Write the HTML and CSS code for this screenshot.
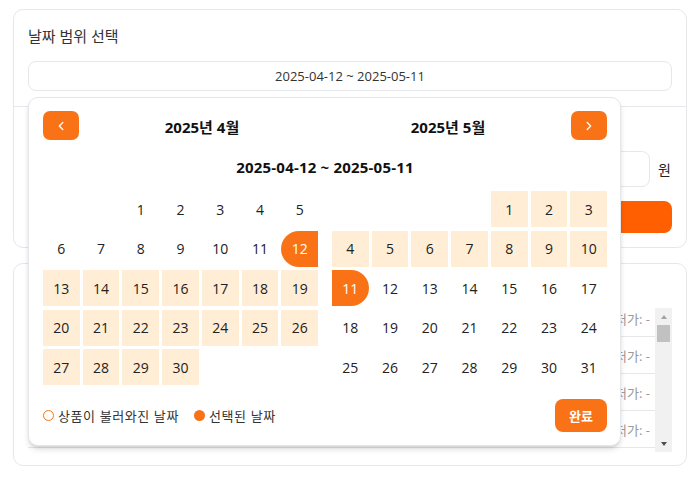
FILE: index.html
```html
<!DOCTYPE html>
<html lang="ko">
<head>
<meta charset="utf-8">
<title>날짜 범위 선택</title>
<link rel="stylesheet" href="styles.css">
</head>
<body>
<div class="page">
  <div class="card">
    <div class="section section-top">
      <div class="title">날짜 범위 선택</div>
      <div class="date-field">
        <div class="date-input">2025-04-12 ~ 2025-05-11</div>
        <div class="popup">
          <div class="cal-header">
            <button class="nav-btn"><svg width="10" height="10" viewBox="0 0 10 10"><path d="M6.8 1.5 L3.3 5 L6.8 8.5" fill="none" stroke="#fff" stroke-width="1.3" stroke-linecap="round" stroke-linejoin="round"/></svg></button>
            <div class="month-label">2025년 4월</div>
            <div class="month-label">2025년 5월</div>
            <button class="nav-btn"><svg width="10" height="10" viewBox="0 0 10 10"><path d="M3.2 1.5 L6.7 5 L3.2 8.5" fill="none" stroke="#fff" stroke-width="1.3" stroke-linecap="round" stroke-linejoin="round"/></svg></button>
          </div>
          <div class="range-text">2025-04-12 ~ 2025-05-11</div>
          <div class="months">
            <div class="month">
              <div class="day empty"></div><div class="day empty"></div>
              <div class="day">1</div><div class="day">2</div><div class="day">3</div><div class="day">4</div><div class="day">5</div>
              <div class="day">6</div><div class="day">7</div><div class="day">8</div><div class="day">9</div><div class="day">10</div><div class="day">11</div><div class="day start">12</div>
              <div class="day range">13</div><div class="day range">14</div><div class="day range">15</div><div class="day range">16</div><div class="day range">17</div><div class="day range">18</div><div class="day range">19</div>
              <div class="day range">20</div><div class="day range">21</div><div class="day range">22</div><div class="day range">23</div><div class="day range">24</div><div class="day range">25</div><div class="day range">26</div>
              <div class="day range">27</div><div class="day range">28</div><div class="day range">29</div><div class="day range">30</div>
            </div>
            <div class="month">
              <div class="day empty"></div><div class="day empty"></div><div class="day empty"></div><div class="day empty"></div>
              <div class="day range">1</div><div class="day range">2</div><div class="day range">3</div>
              <div class="day range">4</div><div class="day range">5</div><div class="day range">6</div><div class="day range">7</div><div class="day range">8</div><div class="day range">9</div><div class="day range">10</div>
              <div class="day end">11</div><div class="day">12</div><div class="day">13</div><div class="day">14</div><div class="day">15</div><div class="day">16</div><div class="day">17</div>
              <div class="day">18</div><div class="day">19</div><div class="day">20</div><div class="day">21</div><div class="day">22</div><div class="day">23</div><div class="day">24</div>
              <div class="day">25</div><div class="day">26</div><div class="day">27</div><div class="day">28</div><div class="day">29</div><div class="day">30</div><div class="day">31</div>
            </div>
          </div>
          <div class="cal-footer">
            <div class="legend">
              <div class="legend-item"><span class="dot hollow"></span>상품이 불러와진 날짜</div>
              <div class="legend-item"><span class="dot filled"></span>선택된 날짜</div>
            </div>
            <button class="done-btn">완료</button>
          </div>
        </div>
      </div>
    </div>
    <div class="section section-bottom">
      <div class="label">최소 금액</div>
      <div class="price-row">
        <div class="price-input"></div>
        <span class="unit">원</span>
      </div>
      <button class="search-btn">조회</button>
    </div>
  </div>

  <div class="card">
    <div class="section section-list">
      <div class="label">상품 목록</div>
      <div class="list">
        <div class="list-body">
          <div class="row"><span class="name">상품 1</span><span class="price">최저가: -</span></div>
          <div class="row"><span class="name">상품 2</span><span class="price">최저가: -</span></div>
          <div class="row"><span class="name">상품 3</span><span class="price">최저가: -</span></div>
          <div class="row"><span class="name">상품 4</span><span class="price">최저가: -</span></div>
          <div class="row"><span class="name">상품 5</span><span class="price">최저가: -</span></div>
        </div>
        <div class="scrollbar" aria-hidden="true">
          <div class="sb-btn"><span class="arrow up"></span></div>
          <div class="sb-track"><div class="sb-thumb"></div></div>
          <div class="sb-btn"><span class="arrow down"></span></div>
        </div>
      </div>
    </div>
  </div>
</div>
</body>
</html>
```
FILE: styles.css
```css
* { box-sizing: border-box; }
body {
  margin: 0;
  background: #fff;
  color: #222;
  font-family: "Open Sans", "Noto Sans CJK KR", sans-serif;
}
button { font-family: inherit; cursor: pointer; }
.page { padding: 9px 7px 18px 13px; }
.card {
  border: 1px solid #e5e7eb;
  border-radius: 10px;
  background: #fff;
}
.card + .card { margin-top: 15px; }
.section { padding: 15px 14px 14px; }
.section-top {
  padding-bottom: 15px;
  border-bottom: 1px solid #e5e7eb;
}
.section-list { padding-bottom: 13px; }
.title, .label {
  font-size: 15px;
  line-height: 22px;
  color: #333;
}
.date-field { position: relative; margin-top: 14px; }
.date-input {
  height: 30px;
  border: 1px solid #e5e7eb;
  border-radius: 8px;
  display: flex;
  align-items: center;
  justify-content: center;
  font-size: 13px;
  color: #333;
}
.popup {
  position: absolute;
  top: calc(100% + 6px);
  left: 0;
  width: 593px;
  background: #fff;
  border: 1px solid #e5e7eb;
  border-radius: 10px;
  box-shadow: 0 4px 6px -1px rgba(0,0,0,.14), 0 2px 4px -2px rgba(0,0,0,.14);
  padding: 13px 13px 13px 14px;
  z-index: 10;
}
.cal-header { display: flex; align-items: center; height: 29px; }
.nav-btn {
  width: 36px;
  height: 29px;
  border: none;
  border-radius: 7px;
  background: #f97316;
  display: flex;
  align-items: center;
  justify-content: center;
  padding: 0;
}
.nav-btn svg { display: block; }
.month-label {
  flex: 1;
  text-align: center;
  font-size: 15px;
  font-weight: 700;
  line-height: 20px;
  color: #111;
  padding-top: 2px;
}
.range-text {
  margin-top: 17px;
  text-align: center;
  font-size: 15px;
  font-weight: 700;
  line-height: 20px;
  letter-spacing: 0.2px;
  color: #111;
}
.months { display: flex; gap: 14px; margin-top: 14px; }
.month {
  flex: 1;
  display: grid;
  grid-template-columns: repeat(7, 1fr);
  grid-auto-rows: 36px;
  column-gap: 3px;
  row-gap: 3.5px;
}
.day {
  display: flex;
  align-items: center;
  justify-content: center;
  font-size: 14px;
  color: #222;
}
.day.range { background: #ffedd5; }
.day.start { background: #f97316; color: #fff; border-radius: 18px 0 0 18px; }
.day.end { background: #f97316; color: #fff; border-radius: 0 18px 18px 0; }
.cal-footer {
  margin-top: 14px;
  display: flex;
  align-items: center;
  justify-content: space-between;
}
.legend { display: flex; align-items: center; gap: 15px; }
.legend-item {
  display: flex;
  align-items: center;
  gap: 4px;
  font-size: 13px;
  letter-spacing: 0.6px;
  color: #333;
  line-height: 18px;
}
.dot { width: 11px; height: 11px; border-radius: 50%; flex: none; }
.dot.hollow { border: 1.5px solid #f97316; }
.dot.filled { background: #f97316; }
.done-btn {
  height: 33px;
  padding: 0 14px;
  border: none;
  border-radius: 8px;
  background: #f97316;
  color: #fff;
  font-size: 13px;
  font-weight: 700;
}
.price-row { display: flex; align-items: center; gap: 8px; margin-top: 7px; }
.price-input {
  flex: 1;
  height: 36px;
  border: 1px solid #e5e7eb;
  border-radius: 8px;
}
.unit { font-size: 14px; color: #222; width: 14px; }
.search-btn {
  display: block;
  width: 100%;
  height: 32px;
  margin-top: 14px;
  border: none;
  border-radius: 8px;
  background: #ff5f00;
  color: #fff;
  font-size: 14px;
}
.list {
  margin-top: 7px;
  height: 144px;
  display: flex;
}
.list-body { flex: 1; overflow: hidden; }
.row {
  height: 37px;
  border-bottom: 1px solid #e5e7eb;
  display: flex;
  align-items: center;
  justify-content: space-between;
  padding: 0 5px 0 12px;
  font-size: 13px;
}
.row:first-child { margin-top: -8px; }
.name { color: #333; }
.price { color: #999; }
.scrollbar {
  width: 17px;
  flex: none;
  background: #f1f1f1;
  display: flex;
  flex-direction: column;
}
.sb-btn {
  height: 17px;
  display: flex;
  align-items: center;
  justify-content: center;
}
.sb-track { flex: 1; padding: 0 2px; }
.sb-thumb { height: 17px; background: #c1c1c1; }
.arrow { width: 0; height: 0; border-left: 3.5px solid transparent; border-right: 3.5px solid transparent; }
.arrow.up { border-bottom: 4px solid #a3a3a3; }
.arrow.down { border-top: 4px solid #505050; }
```
